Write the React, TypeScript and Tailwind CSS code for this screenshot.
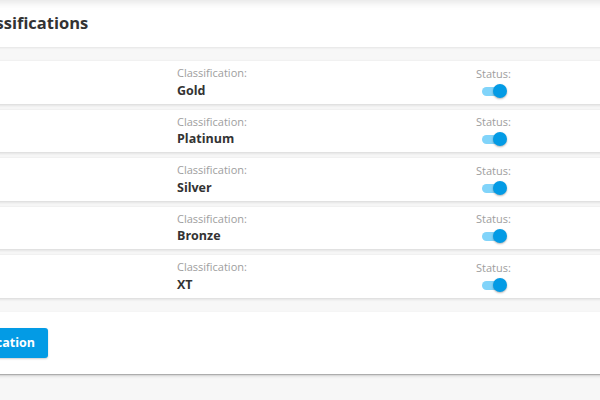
import React from "react";

const rows = ["Gold", "Platinum", "Silver", "Bronze", "XT"];

function Toggle() {
  return (
    <div className="relative ml-[6px] mt-[3px] h-[14px] w-[25px]">
      <div className="absolute left-0 top-[3px] h-[9px] w-[20px] rounded-full bg-[#81d4fa]" />
      <div className="absolute right-0 top-0 h-[14px] w-[14px] rounded-full bg-[#039be5] shadow-[0_1px_2px_rgba(0,0,0,0.3)]" />
    </div>
  );
}

export default function App() {
  return (
    <div
      className="h-[400px] w-[600px] overflow-hidden bg-[#f7f7f7]"
      style={{ fontFamily: '"Open Sans", "Liberation Sans", sans-serif' }}
    >
      <div className="ml-[-100px] w-[820px]">
        <header className="flex h-[47px] items-center bg-white pl-[70px] shadow-[inset_0_8px_8px_-6px_rgba(0,0,0,0.12),0_1px_2px_rgba(0,0,0,0.08)]">
          <h1 className="text-[16.5px] font-bold text-[#333]">Classifications</h1>
        </header>

        <div className="mt-[14px] flex flex-col gap-[6px]">
          {rows.map((value) => (
            <div
              key={value}
              className="grid h-[42.5px] grid-cols-[277px_299px_1fr] items-center bg-white shadow-[0_1px_3px_rgba(0,0,0,0.14)]"
            >
              <div />
              <div className="leading-tight">
                <div className="text-[11px] text-[#9e9e9e]">Classification:</div>
                <div className="mt-[3px] text-[12.5px] font-bold text-[#333]">{value}</div>
              </div>
              <div className="leading-tight">
                <div className="text-[11px] text-[#9e9e9e]">Status:</div>
                <Toggle />
              </div>
            </div>
          ))}
        </div>

        <footer className="mt-[14.5px] flex h-[62px] items-center bg-white shadow-[0_1px_1px_rgba(0,0,0,0.2),0_2px_3px_rgba(0,0,0,0.15)]">
          <div className="flex w-[148px] justify-end">
            <button
              type="button"
              className="rounded-[3px] bg-[#039be5] px-[13px] py-[6px] text-[12.5px] font-bold text-white shadow-[0_1px_2px_rgba(0,0,0,0.2)]"
            >
              Add Classification
            </button>
          </div>
        </footer>
      </div>
    </div>
  );
}
